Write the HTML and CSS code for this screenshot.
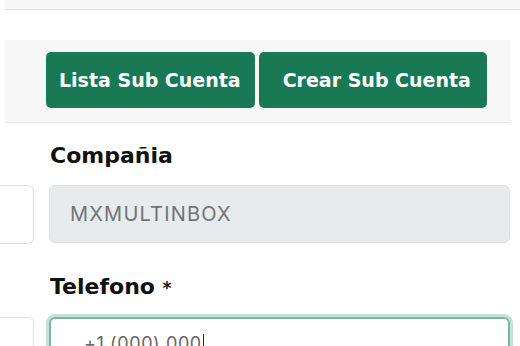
FILE: index.html
```html
<!DOCTYPE html>
<html lang="es">
<head>
  <meta charset="UTF-8" />
  <meta name="viewport" content="width=device-width, initial-scale=1.0" />
  <title>Sub Cuentas</title>
  <link rel="stylesheet" href="styles.css">
</head>
<body>
  <div class="topbar"></div>

  <div class="card-head">
    <button class="btn">Lista Sub Cuenta</button>
    <button class="btn btn-create">Crear Sub Cuenta</button>
  </div>

  <form class="form">
    <div class="field">
      <div class="side-input"></div>
      <label class="field-label" for="compania">Compañia</label>
      <input class="field-input" type="text" id="compania" value="MXMULTINBOX" disabled />
    </div>

    <div class="field">
      <div class="side-input"></div>
      <label class="field-label" for="telefono">Telefono <span class="req">*</span></label>
      <div class="field-input focused">+1 (000) 000<span class="caret"></span></div>
    </div>
  </form>
</body>
</html>
```

FILE: styles.css
```css
body {
  margin: 0;
  background: #fff;
  font-family: Inter, "Noto Sans", sans-serif;
  overflow: hidden;
  height: 346px;
}
.topbar {
  height: 9px;
  margin-left: 5px;
  background: #f7f7f7;
  border-bottom: 1px solid #e2e2e2;
}
.card-head {
  display: flex;
  gap: 4px;
  margin: 30px 10px 0 5px;
  padding: 12px 0 14px 41px;
  background: #f7f7f7;
  border-bottom: 1px solid #ececec;
}
.btn {
  height: 56px;
  padding: 0 14px 0 13px;
  border: none;
  border-radius: 5px;
  background: #197954;
  color: #fff;
  font-family: "DejaVu Sans", sans-serif;
  font-size: 19px;
  font-weight: 700;
}
.btn-create {
  padding: 0 16px 0 24px;
}
.form {
  display: flex;
  flex-direction: column;
  gap: 30px;
  padding: 20px 10px 0 0;
}
.field {
  display: grid;
  grid-template-columns: 34px 1fr;
  grid-template-areas: ". label" "side input";
  column-gap: 15px;
}
.field-label {
  grid-area: label;
  padding-left: 1px;
  margin-bottom: 16px;
  font-family: "DejaVu Sans", sans-serif;
  font-size: 22px;
  font-weight: 700;
  color: #111;
  line-height: 26px;
}
.req {
  font-size: 17px;
}
.side-input {
  grid-area: side;
  height: 57px;
  border: 1px solid #dde1e3;
  border-left: none;
  border-radius: 0 6px 6px 0;
}
.field-input {
  grid-area: input;
  box-sizing: border-box;
  width: 100%;
  height: 58px;
  padding: 0 20px;
  border: 1px solid #dde1e3;
  border-radius: 6px;
  font-family: inherit;
  font-size: 20px;
  letter-spacing: 1.2px;
  color: #6f7478;
}
.field-input:disabled {
  background: #e8ebec;
}
.focused {
  display: flex;
  align-items: center;
  padding-left: 33px;
  padding-bottom: 6px;
  height: 60px;
  border: 2px solid #72b9a1;
  box-shadow: 0 0 0 3px #c4e2d8;
  color: #666;
  font-size: 18px;
  letter-spacing: 0.6px;
  line-height: 1;
}
.caret {
  display: inline-block;
  width: 1px;
  height: 20px;
  background: #222;
  margin-left: 1px;
}
```
